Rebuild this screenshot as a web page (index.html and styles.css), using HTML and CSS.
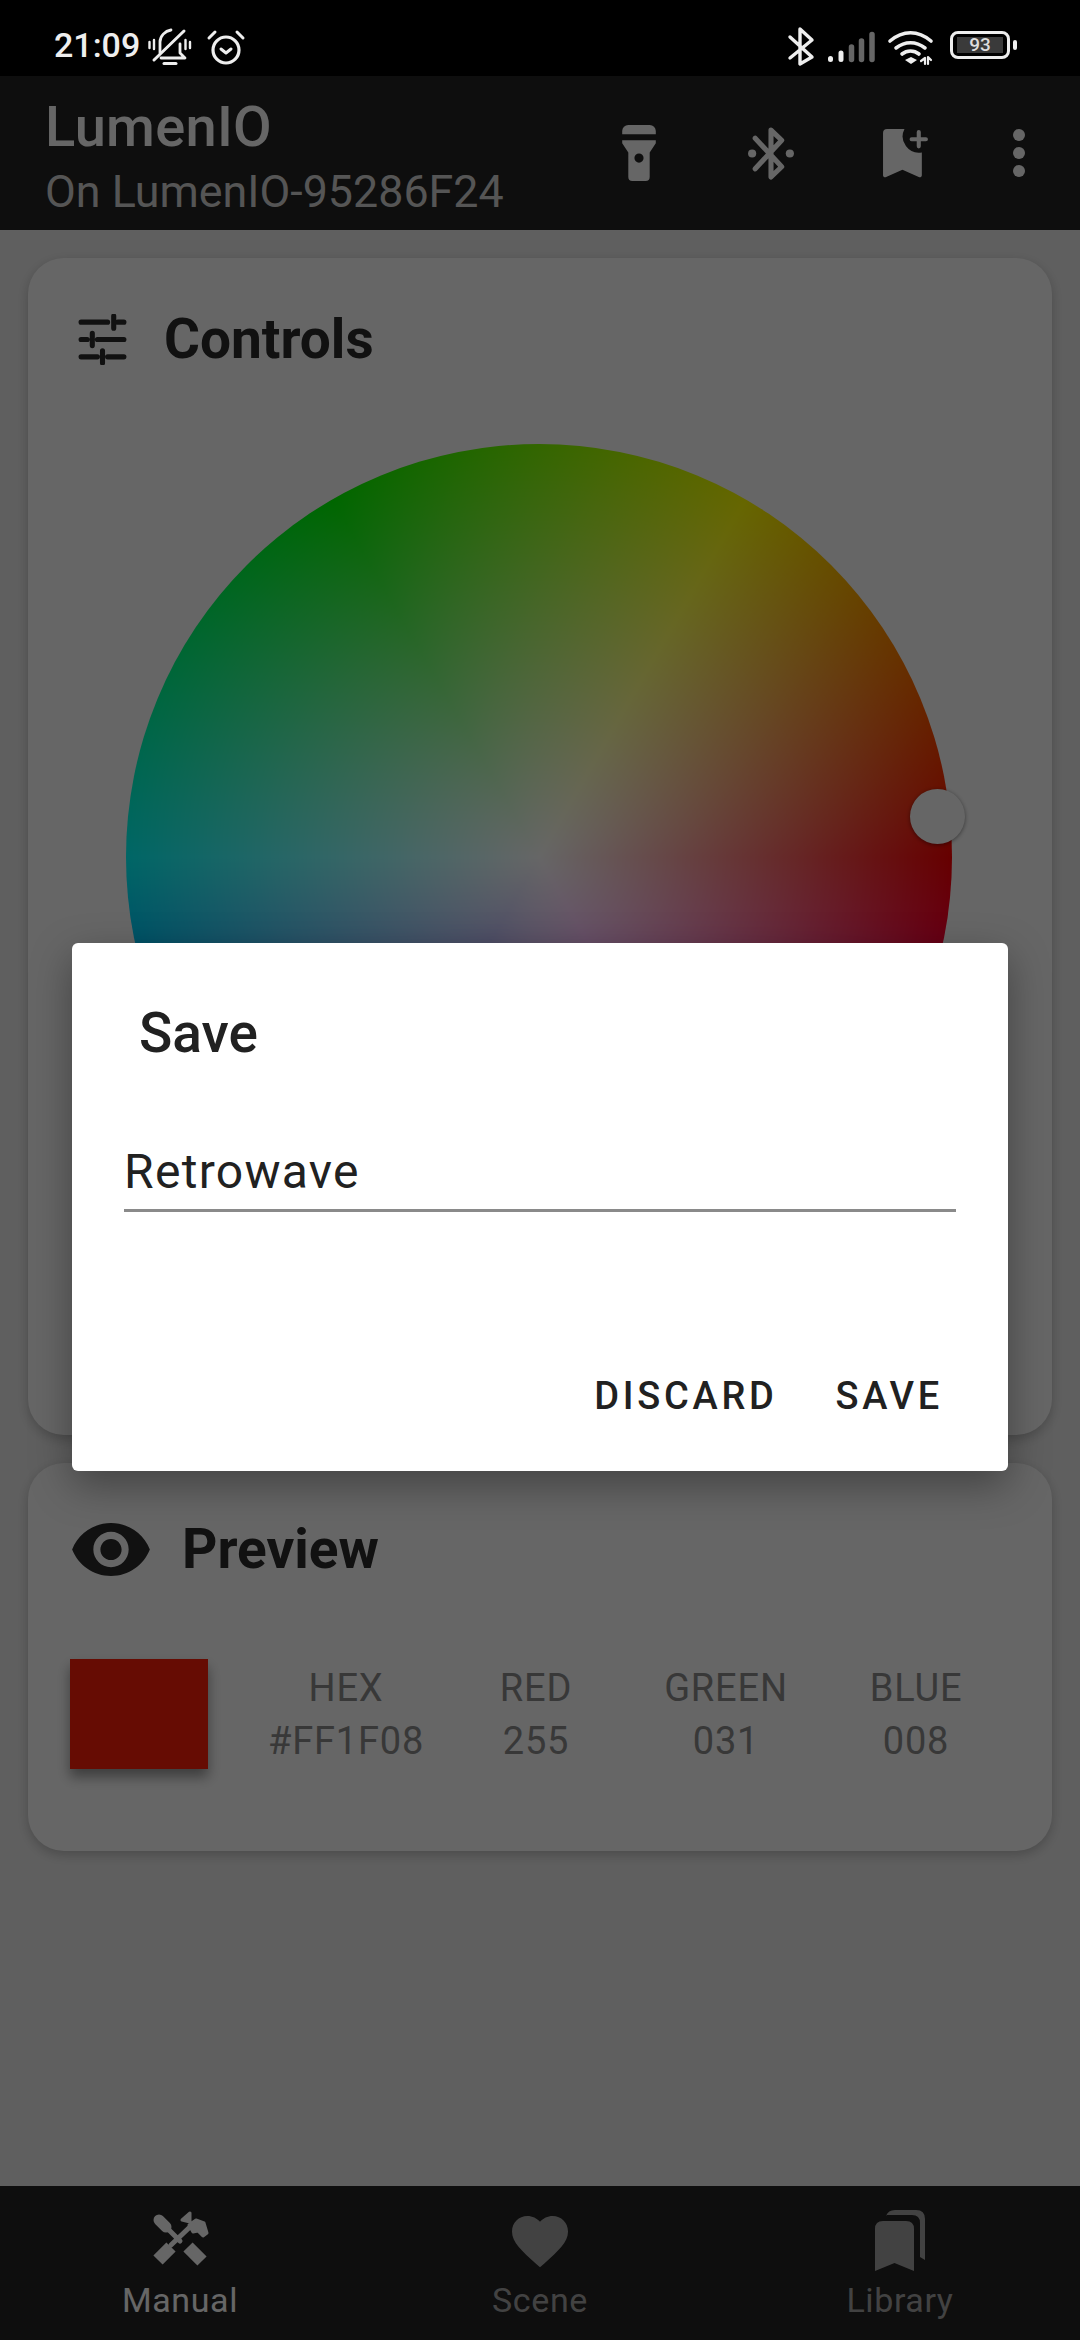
FILE: index.html
```html
<!DOCTYPE html>
<html lang="en">
<head>
<meta charset="utf-8">
<title>LumenIO</title>
<link rel="stylesheet" href="styles.css">
</head>
<body>
<div class="screen">
  <header class="status">
    <div class="status-left">
      <span class="time">21:09</span>
      <svg class="status-glyphs-left" viewBox="0 0 120 50" fill="none" stroke="#eee" stroke-linecap="round" stroke-linejoin="round">
        <path stroke-width="2.8" d="M20 33V22c0-6 5-11 11-12M40 24v9l5 5H21"/>
        <path stroke-width="3" d="M14 40 44 11"/>
        <path stroke-width="3" d="M24 43.500h12"/>
        <path stroke-width="2.400" d="M9.500 22v6M14 20v9M50 22v6M45.500 20v9"/>
        <circle cx="86" cy="30" r="13" stroke-width="3.200"/>
        <path stroke-width="3" d="M81 29l5 4 5-4M69 18l6-6M103 18l-6-6"/>
      </svg>
    </div>
    <div class="status-right">
      <svg class="status-glyphs-right" viewBox="0 0 170 50" fill="none" stroke-linecap="round" stroke-linejoin="round">
        <path stroke="#eee" stroke-width="3.400" d="M10 17 32 37 20 44V9L32 20 10 38"/>
        <path stroke="#eee" stroke-width="5" d="M50.500 38.500v1M61 33v6.500"/>
        <path stroke="#666" stroke-width="5.500" d="M71.500 27v12.500M81.500 21v18.500M92 14.500v25"/>
        <path stroke="#eee" stroke-width="3.600" d="M110 21c13-11 28-11 41 0M116 28c9-7 20-7 29 0M122 34c5-4 12-4 17 0"/>
        <path fill="#eee" d="M125 40l6-3 6 3-6 4z"/>
        <path stroke="#eee" stroke-width="2.200" d="M141 41l4-3v6M148 44v-7l3 3"/>
      </svg>
      <div class="battery"><div class="battery-fill">93</div></div>
      <div class="battery-tip"></div>
    </div>
  </header>

  <section class="appbar">
    <div class="appbar-titles">
      <div class="app-title">LumenIO</div>
      <div class="app-sub">On LumenIO-95286F24</div>
    </div>
    <div class="appbar-actions">
      <svg class="ic-flash" viewBox="0 0 33 55" fill="#fff">
        <path d="M0 6a6 6 0 0 1 6-6h21a6 6 0 0 1 6 6v3H0z"/>
        <path fill-rule="evenodd" d="M0 15h33v3l-6 9v24a4 4 0 0 1-4 4H10a4 4 0 0 1-4-4V27L0 18zM16.500 28a4.500 4.500 0 1 0 0 9 4.500 4.500 0 0 0 0-9z"/>
      </svg>
      <svg class="ic-bt" viewBox="0 0 45 52" fill="#fff">
        <path fill="none" stroke="#fff" stroke-width="5" stroke-linecap="round" stroke-linejoin="round" d="M7 11 33 39 22.500 49V3L33 13 7 41"/>
        <circle cx="4" cy="26" r="4"/><circle cx="41" cy="26" r="4"/>
      </svg>
      <svg class="ic-add" viewBox="0 0 44 48" fill="#fff">
        <path d="M4 0H21A16 16 0 0 0 38 23V45a2 2 0 0 1-3 2L19 40 3 47a2 2 0 0 1-3-2V4a4 4 0 0 1 4-4z"/>
        <path stroke="#fff" stroke-width="4" stroke-linecap="round" d="M35 3v14M28 10h14"/>
      </svg>
      <svg class="ic-more" viewBox="0 0 11 44" fill="#fff">
        <circle cx="5.500" cy="5.500" r="5.500"/><circle cx="5.500" cy="22" r="5.500"/><circle cx="5.500" cy="38.500" r="5.500"/>
      </svg>
    </div>
  </section>

  <main class="content">
    <section class="card card-controls">
      <div class="card-head head-controls">
        <svg class="ic-tune" viewBox="0 0 48 50" fill="none" stroke="#2b2b2b" stroke-width="5" stroke-linecap="round">
          <path d="M3 8h26M39 8h6M35 2v12M3 25h6M19 25h26M14 19v12M3 42h16M29 42h16M24 36v12"/>
        </svg>
        <h2 class="card-title">Controls</h2>
      </div>
      <div class="wheel"><div class="knob"></div></div>
    </section>

    <section class="card card-preview">
      <div class="card-head head-preview">
        <svg class="ic-eye" viewBox="1 4.500 22 15" fill="#2b2b2b">
          <path d="M12 4.500C7 4.500 2.730 7.610 1 12c1.730 4.390 6 7.500 11 7.500s9.270-3.110 11-7.500c-1.730-4.390-6-7.500-11-7.500zM12 17c-2.760 0-5-2.240-5-5s2.240-5 5-5 5 2.240 5 5-2.240 5-5 5zm0-8c-1.660 0-3 1.340-3 3s1.340 3 3 3 3-1.340 3-3-1.340-3-3-3z"/>
        </svg>
        <h2 class="card-title">Preview</h2>
      </div>
      <div class="preview-row">
        <div class="swatch"></div>
        <div class="values">
          <div class="value"><span>HEX</span><span>#FF1F08</span></div>
          <div class="value"><span>RED</span><span>255</span></div>
          <div class="value"><span>GREEN</span><span>031</span></div>
          <div class="value"><span>BLUE</span><span>008</span></div>
        </div>
      </div>
    </section>
  </main>

  <nav class="bottom-nav">
    <div class="tab tab-active">
      <svg class="tab-icon" viewBox="0 0 100 85" fill="#fff" stroke="#fff" stroke-linecap="round" stroke-linejoin="round">
        <path stroke-width="11" d="M29 25l7 7" />
        <path stroke-width="5" fill="none" d="M36 32l14 14M41 50l21-20"/>
        <path stroke-width="13" stroke-linecap="butt" d="M28 65l13-13M58 52l14 14"/>
        <path stroke-width="3" d="M52 25l8-7v9zM59 30l7-5 8 3 3 10-4 3-5-5-5 1z"/>
      </svg>
      <span class="tab-label">Manual</span>
    </div>
    <div class="tab">
      <svg class="tab-icon" viewBox="-5.860 -4.500 35.710 30.360" fill="#a6a6a6">
        <path d="M12 21.350l-1.450-1.320C5.400 15.360 2 12.280 2 8.500 2 5.420 4.420 3 7.500 3c1.740 0 3.410.810 4.500 2.090C13.090 3.810 14.760 3 16.500 3 19.580 3 22 5.420 22 8.500c0 3.780-3.400 6.860-8.550 11.540L12 21.350z"/>
      </svg>
      <span class="tab-label">Scene</span>
    </div>
    <div class="tab">
      <svg class="tab-icon" viewBox="0 0 100 85" fill="#a6a6a6">
        <path d="M25 34q0-8 8-8h23q8 0 8 8v42l-19.500-8L25 76z"/>
        <path d="M36 21q2-6 9-6h21q9 0 9 9v41l-5-3V28q0-8-8-8H36z"/>
      </svg>
      <span class="tab-label">Library</span>
    </div>
  </nav>

  <div class="scrim"></div>

  <div class="dialog">
    <h3 class="dialog-title">Save</h3>
    <div class="dialog-field">Retrowave</div>
    <div class="dialog-actions">
      <span class="dialog-btn">DISCARD</span>
      <span class="dialog-btn">SAVE</span>
    </div>
  </div>
</div>
</body>
</html>
```
FILE: styles.css
```css
* { box-sizing: border-box; }
html, body { margin: 0; padding: 0; }
body { font-family: Roboto, "Liberation Sans", sans-serif; background: #eee; }

.screen {
  position: relative;
  width: 1080px;
  height: 2340px;
  overflow: hidden;
  display: flex;
  flex-direction: column;
  background: #eee;
}

/* status bar */
.status {
  position: relative;
  z-index: 2;
  flex: 0 0 76px;
  height: 76px;
  background: #000;
  display: flex;
  justify-content: space-between;
  padding: 20px 63px 6px 54px;
}
.status-left, .status-right { display: flex; align-items: center; height: 50px; }
.time { width: 81px; color: #eee; font-size: 34px; font-weight: 500; line-height: 50px; white-space: nowrap; }
.status-glyphs-left { width: 120px; height: 50px; margin-left: 5px; }
.status-glyphs-right { width: 170px; height: 50px; }
.battery {
  width: 60px;
  height: 28px;
  border: 3px solid #eee;
  border-radius: 8px;
  padding: 3px 4px;
}
.battery-fill {
  height: 16px;
  background: #3a3a3a;
  color: #ddd;
  font-size: 19px;
  font-weight: 500;
  line-height: 16px;
  text-align: center;
}
.battery-tip { width: 4px; height: 10px; margin-left: 3px; background: #eee; border-radius: 2px; }

/* app bar */
.appbar {
  flex: 0 0 154px;
  height: 154px;
  background: #232323;
  display: flex;
  justify-content: space-between;
  align-items: center;
  padding: 0 55px 0 45px;
}
.appbar-titles { display: flex; flex-direction: column; padding-top: 12px; }
.app-title { color: #fff; font-size: 56px; font-weight: 500; line-height: 66px; letter-spacing: .3px; }
.app-sub { color: #d4d4d4; font-size: 44.800px; line-height: 64px; }
.appbar-actions { display: flex; align-items: center; }
.ic-flash { width: 34px; height: 56px; }
.ic-bt { width: 46px; height: 53px; margin-left: 92px; }
.ic-add { width: 45px; height: 49px; margin-left: 89px; }
.ic-more { width: 12px; height: 48px; margin-left: 85px; }

/* content */
.content {
  flex: 1;
  display: flex;
  flex-direction: column;
  gap: 28px;
  padding: 28px 28px 0;
}
.card {
  background: #fff;
  border-radius: 36px;
  box-shadow: 0 4px 12px rgba(0, 0, 0, .22);
}
.card-controls { height: 1177px; padding: 53px 0 0 50px; }
.card-preview { height: 388px; padding: 56px 0 0 44px; }
.card-head { display: flex; align-items: center; }
.head-controls { gap: 37px; height: 56px; }
.head-preview { gap: 32px; height: 60px; }
.card-title { margin: 0; color: #2b2b2b; font-size: 55px; font-weight: 700; line-height: 60px; }
.ic-tune { width: 49px; height: 51px; }
.ic-eye { width: 78px; height: 53px; }

.wheel {
  position: relative;
  width: 826px;
  height: 826px;
  margin: 77px 0 0 48px;
  border-radius: 50%;
  background:
    radial-gradient(closest-side, #fff, rgba(255, 255, 255, 0)),
    conic-gradient(from 90deg, #f00, #f0f, #00f, #0ff, #0f0, #ff0, #f00);
}
.knob {
  position: absolute;
  left: 784px;
  top: 345px;
  width: 55px;
  height: 55px;
  border-radius: 50%;
  background: #fff;
  box-shadow: 0 1px 4px rgba(0, 0, 0, .45);
}

.preview-row { display: flex; align-items: center; margin: 80px 0 0 -2px; }
.swatch {
  flex: 0 0 138px;
  height: 110px;
  background: #ff1f08;
  box-shadow: 0 8px 12px rgba(0, 0, 0, .4);
}
.values { display: grid; grid-template-columns: repeat(4, 190px); margin-left: 43px; padding-top: 2px; }
.value {
  display: flex;
  flex-direction: column;
  align-items: center;
  color: #8c8c8c;
  font-size: 38px;
  line-height: 53px;
  letter-spacing: .8px;
}

/* bottom nav */
.bottom-nav {
  flex: 0 0 154px;
  height: 154px;
  background: #232323;
  display: grid;
  grid-template-columns: repeat(3, 360px);
  padding-top: 9px;
}
.tab { display: flex; flex-direction: column; align-items: center; }
.tab-icon { width: 100px; height: 85px; }
.tab-label { color: #a6a6a6; font-size: 34px; line-height: 40px; letter-spacing: .6px; }
.tab-active .tab-label { color: #fff; }

/* modal */
.scrim { position: absolute; inset: 0; z-index: 1; background: rgba(0, 0, 0, .6); }
.dialog {
  position: absolute;
  z-index: 3;
  left: 72px;
  top: 943px;
  width: 936px;
  height: 528px;
  padding: 58px 52px 0;
  background: #fff;
  border-radius: 6px;
  box-shadow: 0 14px 40px rgba(0, 0, 0, .35);
  display: flex;
  flex-direction: column;
}
.dialog-title { margin: 0 0 0 15px; color: #212121; font-size: 55px; font-weight: 500; line-height: 64px; }
.dialog-field {
  margin-top: 62px;
  height: 85px;
  padding-top: 10px;
  color: #212121;
  font-size: 48px;
  line-height: 70px;
  letter-spacing: 1.300px;
  border-bottom: 3px solid #8a8a8a;
}
.dialog-actions { display: flex; justify-content: flex-end; gap: 58px; margin: 161px 13px 0 0; }
.dialog-btn { color: #212121; font-size: 38px; font-weight: 500; line-height: 46px; letter-spacing: 3.700px; }
```
